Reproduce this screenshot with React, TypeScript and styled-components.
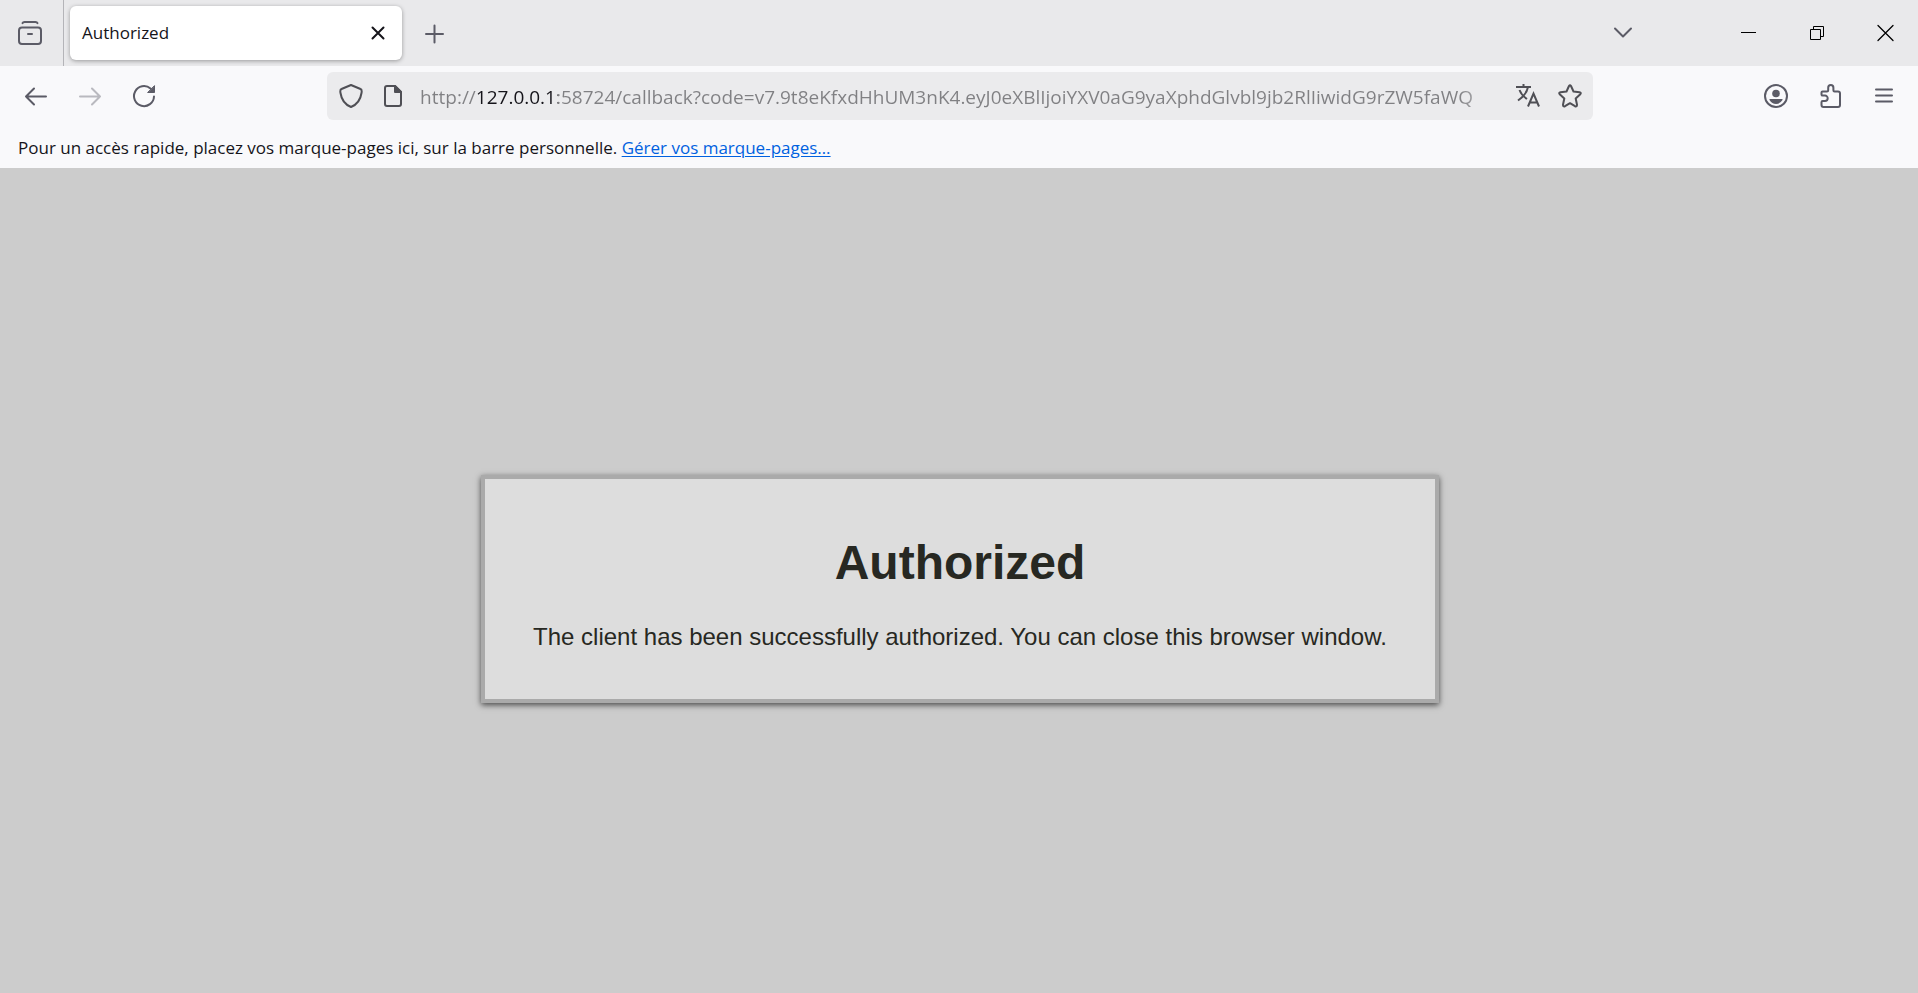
import React from "react";
import styled, { createGlobalStyle } from "styled-components";

const uiFont = `"Open Sans", "Noto Sans", sans-serif`;

const GlobalStyle = createGlobalStyle`
  *, *::before, *::after { box-sizing: border-box; }
  html, body, #root { height: 100%; }
  body { margin: 0; font-family: ${uiFont}; color: #15141a; }
`;

const Window = styled.div`
  display: flex;
  flex-direction: column;
  min-height: 100vh;
  background: #f9f9fb;
`;

const TabStrip = styled.header`
  display: flex;
  align-items: stretch;
  height: 66px;
  background: #e9e9eb;
`;

const IconButton = styled.button<{ $width?: number; $tone?: string }>`
  display: flex;
  flex: none;
  align-items: center;
  justify-content: center;
  width: ${(p) => p.$width ?? 54}px;
  padding: 0;
  border: 0;
  background: none;
  color: ${(p) => p.$tone ?? "#5b5b66"};

  &:disabled { opacity: 0.4; }
  svg { display: block; }
`;

const SidebarSlot = styled.div`
  display: flex;
  width: 64px;
  padding-right: 2px;
  border-right: 1px solid #b4b4b8;
`;

const Tab = styled.div`
  display: flex;
  align-items: center;
  flex: 0 1 332px;
  min-width: 0;
  margin: 6px 6px;
  padding-left: 12px;
  border-radius: 6px;
  background: #fff;
  box-shadow: 0 1px 4px rgba(0, 0, 0, 0.35);
`;

const TabTitle = styled.span`
  flex: 1;
  font-size: 17px;
  line-height: 24px;
`;

const WindowControls = styled.div`
  display: flex;
  margin-left: auto;
`;

const ListTabsSlot = styled.div`
  display: flex;
  margin-right: 64px;
`;

const NavBar = styled.nav`
  display: grid;
  grid-template-columns: 1fr 66vw 1fr;
  align-items: center;
  height: 60px;
  padding: 0 7px 0 9px;
`;

const ButtonGroup = styled.div<{ $end?: boolean }>`
  display: flex;
  justify-content: ${(p) => (p.$end ? "flex-end" : "flex-start")};
`;

const AddressBar = styled.form`
  display: flex;
  align-items: stretch;
  height: 48px;
  padding: 0 2px 0 3px;
  border-radius: 6px;
  background: #ebebed;
`;

const AddressInput = styled.input`
  flex: 1;
  min-width: 0;
  height: 48px;
  margin-left: 6px;
  padding: 2px 0 0;
  border: 0;
  outline: 0;
  font-family: ${uiFont};
  font-size: 19px;
  color: #808083;
  background: linear-gradient(to right, #808083 0 58px, #15141a 58px 138px, #808083 138px);
  -webkit-background-clip: text;
  background-clip: text;
  -webkit-text-fill-color: transparent;
  mask-image: linear-gradient(to left, transparent, #000 48px);
`;

const BookmarksBar = styled.div`
  height: 42px;
  padding: 10px 18px 0;
  font-size: 17px;
  line-height: 24px;
`;

const BookmarksLink = styled.a`
  color: #0061e0;
  text-underline-offset: 2px;
`;

const Page = styled.main`
  display: flex;
  flex: 1;
  align-items: center;
  justify-content: center;
  padding: 16px 0 0 2px;
  background: #ccc;
`;

const Message = styled.section`
  padding: 24px 48px;
  border: 4px solid #aaa;
  background: #ddd;
  box-shadow: 0 2px 6px rgba(0, 0, 0, 0.65);
  color: #272822;
  font-family: "Liberation Sans", Arial, sans-serif;
  text-align: center;
`;

const MessageTitle = styled.h1`
  margin: 32px 0;
  font-size: 48px;
  line-height: 56px;
`;

const MessageText = styled.p`
  margin: 0 0 24px;
  font-size: 24px;
  line-height: 28px;
`;

type IconProps = { size?: number; box?: number; width?: number; children: React.ReactNode };

const Icon = ({ size = 24, box = 24, width = 2, children }: IconProps) => (
  <svg width={size} height={size} viewBox={`0 0 ${box} ${box}`} fill="none" stroke="currentColor"
    strokeWidth={width} strokeLinecap="round" strokeLinejoin="round" aria-hidden="true">
    {children}
  </svg>
);

export default function App() {
  return (
    <>
      <GlobalStyle />
      <Window>
        <TabStrip>
          <SidebarSlot>
            <IconButton $width={60} aria-label="Firefox View">
              <Icon>
                <path d="M4.500 2.200 Q5 1 6.500 1 H17.500 Q19 1 19.500 2.200" />
                <rect x="1" y="6.500" width="22" height="16.500" rx="3" />
                <path d="M10 13 H14" />
              </Icon>
            </IconButton>
          </SidebarSlot>
          <Tab>
            <TabTitle>Authorized</TabTitle>
            <IconButton $width={48} $tone="#15141a" aria-label="Fermer l’onglet">
              <Icon width={2}><path d="M6.500 6.500 L17.500 17.500 M17.500 6.500 L6.500 17.500" /></Icon>
            </IconButton>
          </Tab>
          <IconButton $width={52} aria-label="Nouvel onglet">
            <Icon width={2}><path d="M12.500 4.500 V21.500 M4 13 H21" /></Icon>
          </IconButton>
          <WindowControls>
            <ListTabsSlot>
              <IconButton aria-label="Lister tous les onglets">
                <Icon width={2}><path d="M4 7.500 L12 15.500 L20 7.500" /></Icon>
              </IconButton>
            </ListTabsSlot>
            <IconButton $width={69} $tone="#000" aria-label="Réduire">
              <svg width="25" height="24" fill="none" stroke="currentColor" aria-hidden="true">
                <path d="M5 11.500 H20" />
              </svg>
            </IconButton>
            <IconButton $width={69} $tone="#000" aria-label="Restaurer">
              <svg width="25" height="24" fill="none" stroke="currentColor" aria-hidden="true">
                <path d="M5.500 8.500 H15.500 V18.500 H5.500 Z M8.500 8.500 V5.500 H18.500 V15.500 H15.500" />
              </svg>
            </IconButton>
            <IconButton $width={66} $tone="#000" aria-label="Fermer">
              <Icon width={1}><path d="M5 4.500 L20 19.500 M20 4.500 L5 19.500" strokeWidth="1.300" /></Icon>
            </IconButton>
          </WindowControls>
        </TabStrip>

        <NavBar>
          <ButtonGroup>
            <IconButton aria-label="Précédent">
              <Icon><path d="M22 12.500 H2 M10 4.500 L2 12.500 L10 20.500" /></Icon>
            </IconButton>
            <IconButton disabled aria-label="Suivant">
              <Icon><path d="M2 12.500 H22 M14 4.500 L22 12.500 L14 20.500" /></Icon>
            </IconButton>
            <IconButton aria-label="Actualiser">
              <Icon>
                <path d="M22 12.500 A10 10 0 1 1 18.500 4.500" />
                <path d="M22.500 2 V8.500 H16 Z" fill="currentColor" strokeWidth="1" />
              </Icon>
            </IconButton>
          </ButtonGroup>
          <AddressBar>
            <IconButton type="button" $width={42} $tone="#4f4f55" aria-label="Protections">
              <Icon><path d="M12 1 L21.500 5 C23 5.500 23 6.500 22.500 9 C21.500 16 18 20.500 12 23 C6 20.500 2.500 16 1.500 9 C1 6.500 1 5.500 2.500 5 Z" /></Icon>
            </IconButton>
            <IconButton type="button" $width={42} $tone="#4f4f55" aria-label="Informations sur le site">
              <Icon>
                <path d="M14 2 H6 Q4 2 4 4 V20 Q4 22 6 22 H18 Q20 22 20 20 V8 Z" />
                <path d="M14 2 V8 H20 Z" fill="currentColor" />
              </Icon>
            </IconButton>
            <AddressInput
              aria-label="Adresse"
              readOnly
              value="http://127.0.0.1:58724/callback?code=v7.9t8eKfxdHhUM3nK4.eyJ0eXBlIjoiYXV0aG9yaXphdGlvbl9jb2RlIiwidG9rZW5faWQ"
            />
            <IconButton type="button" $width={42} $tone="#4f4f55" aria-label="Traduire cette page">
              <Icon width={2}>
                <g strokeLinecap="butt" strokeLinejoin="miter">
                  <path d="M0 3 H15 M7.500 0 V3 M12 3 C11 9 7 13 2 16.500 M3.500 6 C5 10 8 13 11 15" />
                  <path d="M12 22.500 L17.500 9.500 L23 22.500 M13.500 18.500 H21.500" />
                </g>
              </Icon>
            </IconButton>
            <IconButton type="button" $width={42} $tone="#4f4f55" aria-label="Marquer cette page">
              <Icon>
                <path d="M11 2 Q12 0.500 13 2 L15.500 7.500 L21.500 8.200 Q23.500 8.700 22.300 10.200 L17.700 14.500 L19 20.700 Q19 23 17 22.200 L12 19.200 L7 22.200 Q5 23 5 20.700 L6.300 14.500 L1.700 10.200 Q0.500 8.700 2.500 8.200 L8.500 7.500 Z" />
              </Icon>
            </IconButton>
          </AddressBar>
          <ButtonGroup $end>
            <IconButton aria-label="Compte">
              <Icon>
                <circle cx="12" cy="12" r="11" />
                <circle cx="12" cy="9.500" r="3.800" fill="currentColor" stroke="none" />
                <path d="M6 15 H18 Q19 15 18.500 16 Q16 20 12 20 Q8 20 5.500 16 Q5 15 6 15 Z" fill="currentColor" stroke="none" />
              </Icon>
            </IconButton>
            <IconButton aria-label="Extensions">
              <Icon>
                <path d="M4.500 7.500 H9 Q10.200 7.500 10.200 6.300 V3.700 A2.600 2.600 0 0 1 15.400 3.700 V6.300 Q15.400 7.500 16.600 7.500 H20 Q22 7.500 22 9.500 V21 Q22 23 20 23 H5.500 Q3.500 23 3.500 21 V18.200 Q3.500 17 4.700 17 H7 A2.700 2.700 0 0 0 7 11.600 H4.700 Q3.500 11.600 3.500 10.400 V8.500 Q3.500 7.500 4.500 7.500 Z" />
              </Icon>
            </IconButton>
            <IconButton aria-label="Menu">
              <Icon><path d="M4 5.500 H20 M4 11.500 H20 M4 17.500 H20" /></Icon>
            </IconButton>
          </ButtonGroup>
        </NavBar>

        <BookmarksBar>
          Pour un accès rapide, placez vos marque-pages ici, sur la barre personnelle.{" "}
          <BookmarksLink href="#marque-pages">Gérer vos marque-pages…</BookmarksLink>
        </BookmarksBar>

        <Page>
          <Message>
            <MessageTitle>Authorized</MessageTitle>
            <MessageText>The client has been successfully authorized. You can close this browser window.</MessageText>
          </Message>
        </Page>
      </Window>
    </>
  );
}
